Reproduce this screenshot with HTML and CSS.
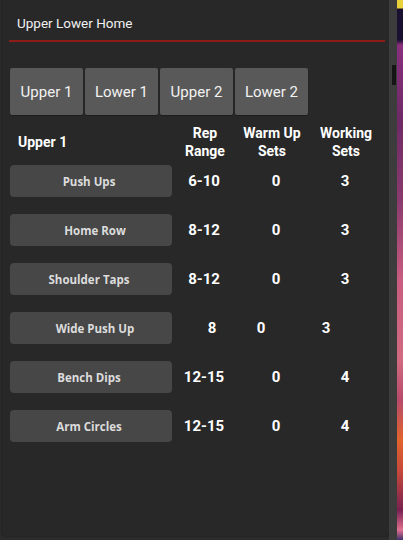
FILE: index.html
```html
<!DOCTYPE html>
<html>
<head>
<meta charset="utf-8">
<link rel="stylesheet" href="styles.css">
</head>
<body>
<div class="screen">
  <div class="dialog">
    <div class="title">Upper Lower Home</div>
    <div class="rule"></div>
    <div class="tabs">
      <div class="tab">Upper 1</div>
      <div class="tab">Lower 1</div>
      <div class="tab">Upper 2</div>
      <div class="tab">Lower 2</div>
    </div>
    <div class="head">
      <div class="head-name">Upper 1</div>
      <div class="head-col c-rep">Rep<br>Range</div>
      <div class="head-col c-warm">Warm Up<br>Sets</div>
      <div class="head-col c-work">Working<br>Sets</div>
    </div>
    <div class="rows">
      <div class="row"><div class="ex">Push Ups</div><div class="num c-rep">6-10</div><div class="num c-warm">0</div><div class="num c-work">3</div></div>
      <div class="row"><div class="ex ex-r">Home Row</div><div class="num c-rep">8-12</div><div class="num c-warm">0</div><div class="num c-work">3</div></div>
      <div class="row"><div class="ex">Shoulder Taps</div><div class="num c-rep">8-12</div><div class="num c-warm">0</div><div class="num c-work">3</div></div>
      <div class="row alt"><div class="ex ex-r">Wide Push Up</div><div class="num c-rep">8</div><div class="num c-warm">0</div><div class="num c-work">3</div></div>
      <div class="row"><div class="ex">Bench Dips</div><div class="num c-rep">12-15</div><div class="num c-warm">0</div><div class="num c-work">4</div></div>
      <div class="row"><div class="ex">Arm Circles</div><div class="num c-rep">12-15</div><div class="num c-warm">0</div><div class="num c-work">4</div></div>
    </div>
  </div>
  <div class="band"><div class="thumb"></div></div>
  <div class="wall"></div>
</div>
</body>
</html>
```

FILE: styles.css
```css
html, body {
  margin: 0;
  padding: 0;
  background: #2c2c2c;
  width: 403px;
  height: 540px;
  overflow: hidden;
}
.screen {
  display: flex;
  height: 540px;
}
.dialog {
  margin-left: 2px;
  width: 387px;
  height: 536px;
  background: #282828;
  box-shadow: 0 0 2px rgba(0,0,0,0.6);
  border-radius: 0 0 3px 3px;
  font-family: Roboto, "Liberation Sans", sans-serif;
  color: #fff;
  flex: none;
}
.title {
  padding: 15px 0 0 15px;
  font-size: 13.5px;
  line-height: 16px;
  color: #f0f0f0;
}
.rule {
  margin: 9px 4px 0 7px;
  height: 2px;
  background: #8e1c17;
}
.tabs {
  display: flex;
  gap: 2px;
  margin: 26px 0 0 8px;
}
.tab {
  width: 73px;
  height: 47px;
  background: #595959;
  border-radius: 2px;
  display: flex;
  align-items: center;
  justify-content: center;
  font-size: 15px;
  color: #f2f2f2;
  box-shadow: 0 1px 1px rgba(0,0,0,0.3);
}
.head {
  display: flex;
  align-items: center;
  margin-top: 9px;
  height: 36px;
  font-weight: bold;
  font-size: 14px;
  line-height: 18px;
}
.head-name {
  box-sizing: border-box;
  width: 170px;
  padding-left: 16px;
  flex: none;
}
.head-col {
  text-align: center;
  flex: none;
}
.head .c-rep { width: 66px; }
.head .c-warm { width: 68px; }
.head .c-work { width: 80px; }
.rows {
  display: flex;
  flex-direction: column;
  gap: 17px;
  margin-top: 5px;
}
.row {
  display: flex;
  align-items: center;
  height: 32px;
}
.ex {
  margin-left: 8px;
  width: 162px;
  height: 32px;
  background: #474747;
  border-radius: 4px;
  display: flex;
  align-items: center;
  justify-content: center;
  font-family: "Open Sans", "Noto Sans", sans-serif;
  font-weight: 700;
  font-size: 11.5px;
  color: #dcdcdc;
  box-sizing: border-box;
  padding-right: 4px;
  flex: none;
}
.ex-r {
  padding-right: 0;
  padding-left: 8px;
}
.num {
  text-align: center;
  font-weight: bold;
  font-size: 15px;
  flex: none;
}
.row .c-rep { width: 64px; }
.row .c-warm { width: 80px; }
.row .c-work { width: 58px; }
.row.alt .c-rep { width: 80px; }
.row.alt .c-warm { width: 18px; }
.row.alt .c-work { width: 112px; }
.band {
  width: 8px;
  height: 540px;
  background: #3c3c3c;
  flex: none;
  position: relative;
}
.thumb {
  position: absolute;
  left: 3px;
  top: 65px;
  width: 4px;
  height: 20px;
  background: #151515;
}
.wall {
  flex: 1;
  height: 540px;
  background: linear-gradient(180deg, #e8d23a 0px, #e8d23a 8px, #1a1030 9px, #1a1030 40px, #8a2f7d 45px, #6e2a66 120px, #8a3a6e 200px, #c95c80 280px, #d26a80 360px, #b84a6a 400px, #e0642c 440px, #c74a3a 470px, #7a2050 510px, #e07090 530px, #40306a 540px);
}
```
